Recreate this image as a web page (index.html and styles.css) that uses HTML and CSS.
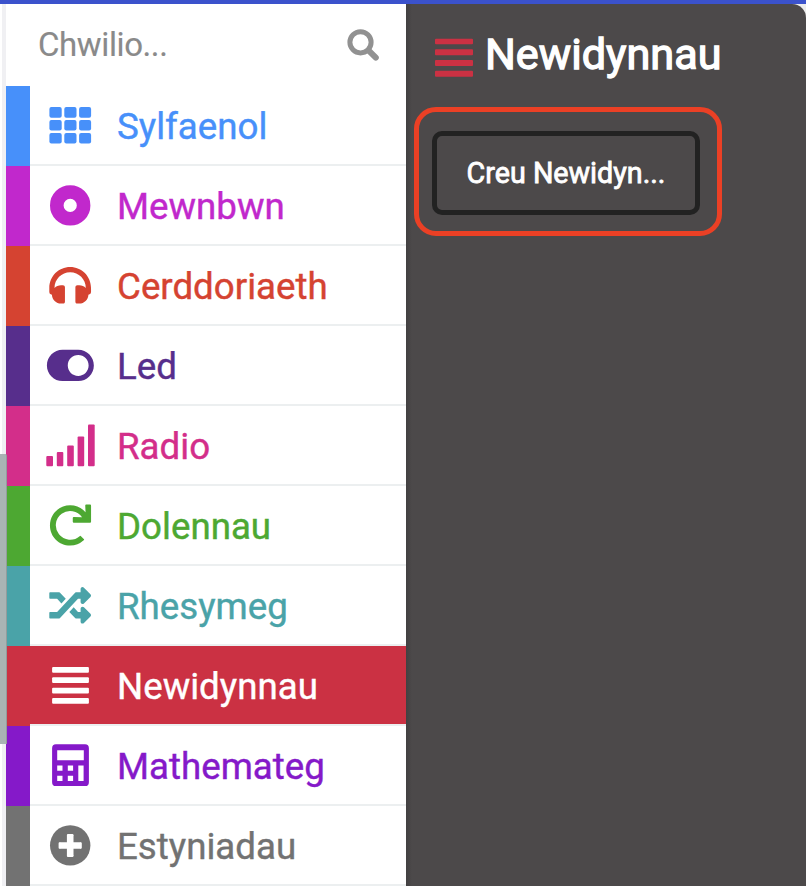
FILE: index.html
```html
<!DOCTYPE html>
<html lang="cy">
<head>
<meta charset="utf-8">
<title>Newidynnau</title>
<link rel="stylesheet" href="styles.css">
</head>
<body>
<div class="topbar"></div>
<div class="workspace">
  <div class="gutter"><div class="scroll-thumb"></div></div>
  <nav class="toolbox">
    <div class="search">
      <span class="search-label">Chwilio...</span>
      <svg class="search-icon" viewBox="0 0 34 34" width="34" height="34"><circle cx="13.5" cy="13.3" r="10.6" fill="none" stroke="currentColor" stroke-width="5"/><path d="M22 21.8L28.8 28.6" stroke="currentColor" stroke-width="6" stroke-linecap="round"/></svg>
    </div>
    <ul class="categories">
      <li class="row basic"><div class="cell">
        <svg class="icon" viewBox="0 0 80 78"><g><rect x="19.4" y="21.1" width="12.3" height="10.6" rx="2"/><rect x="34.3" y="21.1" width="12.2" height="10.6" rx="2"/><rect x="49.1" y="21.1" width="12" height="10.6" rx="2"/><rect x="19.4" y="34.1" width="12.3" height="10.4" rx="2"/><rect x="34.3" y="34.1" width="12.2" height="10.4" rx="2"/><rect x="49.1" y="34.1" width="12" height="10.4" rx="2"/><rect x="19.4" y="47" width="12.3" height="10.6" rx="2"/><rect x="34.3" y="47" width="12.2" height="10.6" rx="2"/><rect x="49.1" y="47" width="12" height="10.6" rx="2"/></g></svg>
        <span class="label">Sylfaenol</span></div></li>
      <li class="row input"><div class="cell">
        <svg class="icon" viewBox="0 0 80 78"><circle cx="40.2" cy="39.4" r="13.4" fill="none" stroke="currentColor" stroke-width="13.6"/></svg>
        <span class="label">Mewnbwn</span></div></li>
      <li class="row music"><div class="cell">
        <svg class="icon" viewBox="0 0 80 78"><path transform="translate(19.3 18.5) scale(.0815)" d="M256 32C114.52 32 0 146.497 0 288v48a32 32 0 0 0 17.689 28.622l14.383 7.191C34.083 431.903 83.421 480 144 480h24c13.255 0 24-10.745 24-24V280c0-13.255-10.745-24-24-24h-24c-31.342 0-59.671 12.879-80 33.627V288c0-105.869 86.131-192 192-192s192 86.131 192 192v1.627C427.671 268.879 399.342 256 368 256h-24c-13.255 0-24 10.745-24 24v176c0 13.255 10.745 24 24 24h24c60.579 0 109.917-48.098 111.928-108.187l14.382-7.191A32 32 0 0 0 512 336v-48c0-141.479-114.496-256-256-256z"/></svg>
        <span class="label">Cerddoriaeth</span></div></li>
      <li class="row led"><div class="cell">
        <svg class="icon" viewBox="0 0 80 78"><path transform="translate(16.9 18.6) scale(.0815)" d="M384 64H192C86 64 0 150 0 256s86 192 192 192h192c106 0 192-86 192-192S490 64 384 64zm0 320c-70.8 0-128-57.3-128-128 0-70.8 57.3-128 128-128 70.8 0 128 57.3 128 128 0 70.8-57.3 128-128 128z"/></svg>
        <span class="label">Led</span></div></li>
      <li class="row radio"><div class="cell">
        <svg class="icon" viewBox="0 0 80 78"><rect x="16.3" y="50" width="6.7" height="10.3" rx="1"/><rect x="26.8" y="46" width="6.5" height="14.3" rx="1"/><rect x="37.2" y="39.4" width="6.6" height="20.9" rx="1"/><rect x="47.6" y="30.4" width="6.6" height="29.9" rx="1"/><rect x="58" y="18.6" width="6.7" height="41.7" rx="1"/></svg>
        <span class="label">Radio</span></div></li>
      <li class="row loops"><div class="cell">
        <svg class="icon" viewBox="0 0 80 78"><path transform="translate(19.3 18.5) scale(.0815)" d="M500.33 0h-47.41a12 12 0 0 0-12 12.57l4 82.76A247.42 247.42 0 0 0 256 8C119.34 8 7.9 119.53 8 256.19 8.1 393.07 119.1 504 256 504a247.1 247.1 0 0 0 166.18-63.91 12 12 0 0 0 .48-17.43l-34-34a12 12 0 0 0-16.38-.55A176 176 0 1 1 402.1 157.8l-101.53-4.87a12 12 0 0 0-12.57 12v47.41a12 12 0 0 0 12 12h200.33a12 12 0 0 0 12-12V12a12 12 0 0 0-12-12z"/></svg>
        <span class="label">Dolennau</span></div></li>
      <li class="row logic"><div class="cell">
        <svg class="icon" viewBox="0 0 80 78"><path transform="translate(19.3 18.5) scale(.0815)" d="M504.971 359.029c9.373 9.373 9.373 24.569 0 33.941l-80 79.984c-15.01 15.01-40.971 4.49-40.971-16.971V416h-58.785a12.004 12.004 0 0 1-8.773-3.812l-70.556-75.596 53.333-57.143L352 336h32v-39.981c0-21.438 25.943-31.998 40.971-16.971l80 79.981zM12 176h84l52.781 56.551 53.333-57.143-70.556-75.596A11.999 11.999 0 0 0 122.785 96H12c-6.627 0-12 5.373-12 12v56c0 6.627 5.373 12 12 12zm372 0v39.984c0 21.46 25.961 31.98 40.971 16.971l80-79.984c9.373-9.373 9.373-24.569 0-33.941l-80-79.981C409.943 24.021 384 34.582 384 56.019V96h-58.785a12.004 12.004 0 0 0-8.773 3.812L96 336H12c-6.627 0-12 5.373-12 12v56c0 6.627 5.373 12 12 12h110.785c3.326 0 6.503-1.381 8.773-3.812L352 176h32z"/></svg>
        <span class="label">Rhesymeg</span></div></li>
      <li class="row variables selected"><div class="cell">
        <svg class="icon" viewBox="0 0 80 78"><rect x="22.1" y="21" width="36.8" height="5.8" rx="1"/><rect x="22.1" y="31.2" width="36.8" height="5.8" rx="1"/><rect x="22.1" y="41.7" width="36.8" height="5.8" rx="1"/><rect x="22.1" y="52" width="36.8" height="5.8" rx="1"/></svg>
        <span class="label">Newidynnau</span></div></li>
      <li class="row maths"><div class="cell">
        <svg class="icon" viewBox="0 0 80 78"><path fill-rule="evenodd" d="M26 18.3h29a3.9 3.9 0 0 1 3.9 3.9v34a3.9 3.9 0 0 1-3.9 3.9H26a3.9 3.9 0 0 1-3.9-3.9v-34a3.9 3.9 0 0 1 3.9-3.9zM27.2 24.2v10h26.6v-10zM27.2 39.4v5.3h5.3v-5.3zM37.8 39.4v5.3h5.3v-5.3zM48.3 39.4v15.5h5.3V39.4zM27.2 49.8v5.3h5.3v-5.3zM37.8 49.8v5.3h5.3v-5.3z"/></svg>
        <span class="label">Mathemateg</span></div></li>
      <li class="row extensions"><div class="cell">
        <svg class="icon" viewBox="0 0 80 78"><circle cx="40.2" cy="39.4" r="20.2"/><path d="M29.6 39.5h21.2M40.2 28.9v21.2" stroke="#fff" stroke-width="6.6"/><path d="M29.6 37.2v4.6M50.8 37.2v4.6M37.9 28.9h4.6M37.9 50.1h4.6" stroke="#fff" stroke-width="2" stroke-linecap="round"/></svg>
        <span class="label">Estyniadau</span></div></li>
    </ul>
  </nav>
  <main class="flyout">
    <header class="heading">
      <svg class="heading-icon" viewBox="0 0 38 40" width="38" height="40"><rect y="0.7" width="38" height="5.6" rx="1"/><rect y="11.2" width="38" height="6" rx="1"/><rect y="22.1" width="38" height="6" rx="1"/><rect y="32.8" width="38" height="6" rx="1"/></svg>
      <h1 class="title">Newidynnau</h1>
    </header>
    <div class="highlight"><button class="create">Creu Newidyn...</button></div>
  </main>
</div>
</body>
</html>
```
FILE: styles.css
```css
* { box-sizing: border-box; }
body {
  margin: 0;
  height: 886px;
  overflow: hidden;
  background: #fff;
  font-family: Roboto, sans-serif;
}
.topbar { height: 4px; background: #3b52cc; }
.workspace {
  display: flex;
  height: 882px;
  background: #ececec;
}
.gutter {
  position: relative;
  flex: none;
  width: 6px;
  border-left: 2px solid #fff;
  background: #f0f0f3;
}
.scroll-thumb {
  position: absolute;
  z-index: 1;
  left: -2px;
  top: 450px;
  width: 7px;
  height: 290px;
  background: #a9b4b4;
  border-right: 1px solid #929c9c;
  border-top-right-radius: 2px;
}
.toolbox {
  flex: none;
  width: 400px;
  background: #fff;
}
.search {
  display: flex;
  align-items: center;
  justify-content: space-between;
  height: 82px;
  padding: 0 25px 0 32px;
  color: #8a8a8a;
}
.search-label {
  font-size: 33px;
  line-height: 40px;
  letter-spacing: -0.4px;
  -webkit-text-stroke: 0.15px currentColor;
}
.search-icon { display: block; color: #919191; margin-top: 2px; }
.categories { margin: 0; padding: 0; list-style: none; }
.row {
  height: 80px;
  border-left: 24px solid currentColor;
}
.cell {
  display: flex;
  align-items: center;
  height: 80px;
  border-bottom: 2px solid #eceff0;
}
.icon { flex: none; width: 80px; height: 78px; fill: currentColor; }
.label {
  margin-left: 7px;
  padding-top: 4px;
  font-size: 36.7px;
  line-height: 48px;
  white-space: nowrap;
  -webkit-text-stroke: 0.4px currentColor;
}
.basic { color: #4790fa; }
.input { color: #c128cc; }
.music { color: #d54331; }
.led { color: #572e8c; }
.radio { color: #d32e8a; }
.loops { color: #4da832; }
.logic { color: #4aa3a8; }
.variables { color: #cb3143; }
.maths { color: #8519c9; }
.extensions { color: #727272; }
.selected .cell { background: #cb3143; color: #fff; }
.flyout {
  flex: 1;
  padding: 24px 8px;
  background: linear-gradient(90deg, #424041, #4c494a 6px);
  border-top-right-radius: 14px;
}
.heading {
  display: flex;
  align-items: center;
  height: 56px;
  padding-left: 21px;
}
.heading-icon { fill: #cb3143; margin-top: 4px; }
.title {
  margin: 0 0 2px 12px;
  color: #fff;
  font-size: 43.2px;
  line-height: 56px;
  font-weight: 400;
  -webkit-text-stroke: 1.3px currentColor;
}
.highlight {
  width: 308px;
  height: 129px;
  margin-top: 23px;
  padding: 19px 13px;
  border: 5px solid #eb4025;
  border-radius: 22px;
}
.create {
  display: block;
  width: 268px;
  height: 84px;
  padding: 0;
  border: 5px solid #222;
  border-radius: 10px;
  background: transparent;
  color: #fff;
  font: 400 28.7px Roboto, sans-serif;
  -webkit-text-stroke: 0.8px currentColor;
}
```
